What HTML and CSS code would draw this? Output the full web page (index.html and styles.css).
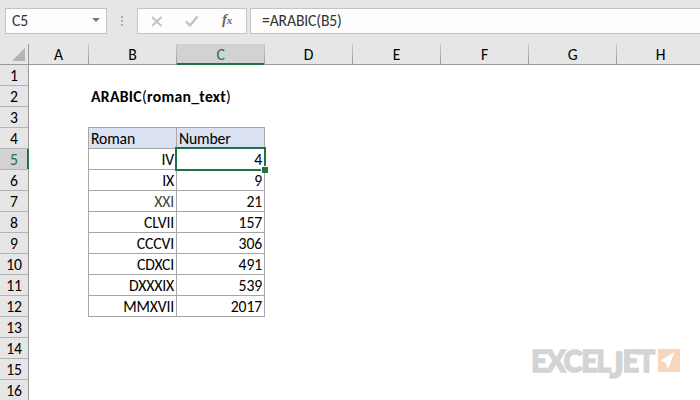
FILE: index.html
```html
<!DOCTYPE html>
<html lang="en">
<head>
<meta charset="utf-8">
<title>ARABIC function</title>
<link rel="stylesheet" href="styles.css">
</head>
<body>
<div class="app">
  <div class="bar">
    <div class="box name"><span>C5</span><svg width="8" height="4" viewBox="0 0 8 4"><path d="M0 0h8L4 4z" fill="#777"/></svg></div>
    <div class="dots"><i></i><i></i><i></i></div>
    <div class="box tools">
      <svg width="12" height="11" viewBox="0 0 12 11"><path d="M1 1l9.5 9M10.5 1L1 10" stroke="#c3c3c3" stroke-width="2" fill="none"/></svg>
      <svg width="14" height="12" viewBox="0 0 14 12"><path d="M1 6.5l4 4L12.5 1.5" stroke="#c3c3c3" stroke-width="2.4" fill="none"/></svg>
      <span class="fx">f<small>x</small></span>
    </div>
    <div class="box formula"><span>=ARABIC(B5)</span></div>
  </div>
  <div class="heads">
    <div class="corner"><svg width="13" height="13" viewBox="0 0 13 13"><path d="M13 0v13H0z" fill="#b4b4b4"/></svg></div>
    <div class="col a"><span>A</span></div><div class="col"><span>B</span></div><div class="col active"><span>C</span></div><div class="col"><span>D</span></div><div class="col"><span>E</span></div><div class="col"><span>F</span></div><div class="col"><span>G</span></div><div class="col"><span>H</span></div>
  </div>
  <div class="body">
    <div class="rows">
      <div>1</div><div>2</div><div>3</div><div>4</div><div class="active">5</div><div>6</div><div>7</div><div>8</div><div>9</div><div>10</div><div>11</div><div>12</div><div>13</div><div>14</div><div>15</div><div>16</div>
    </div>
    <div class="sheet">
      <div class="title"><b>ARABIC</b>(<b>roman_text</b>)</div>
      <div class="table">
        <div class="th">Roman</div><div class="th">Number</div>
        <div><span>IV</span></div><div class="sel"><span>4</span></div>
        <div><span>IX</span></div><div><span>9</span></div>
        <div class="soft"><span>XXI</span></div><div><span>21</span></div>
        <div><span>CLVII</span></div><div><span>157</span></div>
        <div><span>CCCVI</span></div><div><span>306</span></div>
        <div><span>CDXCI</span></div><div><span>491</span></div>
        <div><span>DXXXIX</span></div><div><span>539</span></div>
        <div><span>MMXVII</span></div><div><span>2017</span></div>
      </div>
    </div>
  </div>
  <div class="logo"><span>EXCEL<em>J</em>ET</span><svg width="22" height="23" viewBox="0 0 22 23"><path d="M0 0h22v23H0z" fill="#f9d5bc"/><path d="M16.5 3L2.5 11.5l5 2L10 20z" fill="#fff"/></svg></div>
</div>
</body>
</html>
```
FILE: styles.css
```css
* { box-sizing: border-box; }
body { margin: 0; }
.app {
  position: relative;
  width: 700px;
  height: 400px;
  overflow: hidden;
  background: #fff;
  color: #000;
  font: 15.7px/20px Carlito, Lato, sans-serif;
  letter-spacing: -0.15px;
}
.bar {
  display: flex;
  height: 44px;
  padding: 8px 0 10px 5px;
  background: #e6e6e6;
  color: #333;
}
.bar > * { flex: none; }
.box {
  display: flex;
  align-items: center;
  height: 26px;
  border: 1px solid #c3c3c3;
  background: #fdfdfd;
}
.name { width: 102px; padding: 0 6px; justify-content: space-between; }
.name svg { margin-top: -3px; }
.dots {
  display: flex;
  flex-direction: column;
  gap: 2px;
  width: 30px;
  padding: 8px 0 0 14px;
}
.dots i { width: 2px; height: 2px; background: #adadad; }
.tools { width: 110px; padding-left: 13px; }
.tools svg + svg { margin-left: 22px; }
.fx {
  margin: -3px 0 0 23px;
  color: #666;
  font: italic bold 15px/20px "Liberation Serif", serif;
}
.fx small { font-size: 11px; }
.formula { width: 460px; margin-left: 3px; padding-left: 11px; flex: none; }
.heads {
  display: flex;
  height: 21px;
  background: #e6e6e6;
  border-bottom: 1px solid #999;
}
.corner {
  flex: none;
  width: 29px;
  padding: 4px 0 0 12px;
  border-right: 1px solid #999;
}
.corner svg { display: block; }
.col {
  flex: none;
  width: 88px;
  height: 20px;
  padding-top: 1px;
  text-align: center;
  border-right: 1px solid;
  border-image: linear-gradient(#ccc, #999) 1;
}
.col.a { width: 60px; }
.col.active {
  height: 21px;
  background: #d2d2d2;
  color: #217346;
  box-shadow: inset 0 -2px #217346;
}
.body { display: flex; }
.rows { width: 29px; background: #e6e6e6; border-right: 1px solid #999; }
.rows div {
  height: 21px;
  padding-top: 1px;
  text-align: center;
  border-bottom: 1px solid #b4b4b4;
}
.rows .active {
  width: 29px;
  padding-right: 1px;
  background: #d2d2d2;
  color: #217346;
  box-shadow: inset -2px 0 #217346;
}
.sheet { padding: 21px 0 0 59px; }
.title {
  height: 41px;
  padding: 1px 0 0 3px;
  letter-spacing: 0.3px;
  white-space: nowrap;
}
.table {
  display: grid;
  grid-template-columns: 88px 88px;
  width: 177px;
  border: solid #a6a6a6;
  border-width: 1px 0 0 1px;
}
.table div {
  position: relative;
  height: 21px;
  padding: 1px 2px 0;
  text-align: right;
  border: solid #a6a6a6;
  border-width: 0 1px 1px 0;
}
.table .th { text-align: left; background: #d9e1f2; }
.table .soft { color: #444; }
.table .sel { z-index: 1; }
.sel::before {
  content: "";
  position: absolute;
  inset: -2px;
  border: 2px solid #217346;
}
.sel::after {
  content: "";
  position: absolute;
  right: -4px;
  bottom: -4px;
  width: 6px;
  height: 6px;
  background: #217346;
  border: solid #fff;
  border-width: 1px 0 0 1px;
}
.logo {
  position: absolute;
  left: 531px;
  top: 349px;
  display: flex;
  align-items: flex-start;
  height: 30px;
  color: #d2d5d4;
  font: 900 31px/23px Lato, sans-serif;
}
.logo span {
  width: 127px;
  height: 23px;
  letter-spacing: -1.5px;
  white-space: nowrap;
  transform: scaleX(0.93);
  transform-origin: 0 0;
  -webkit-text-stroke: 1.4px #d2d5d4;
}
.logo em {
  position: relative;
  top: 6px;
  font-size: 36px;
  font-style: normal;
  line-height: 0;
  margin-left: -0.5px;
}
```
